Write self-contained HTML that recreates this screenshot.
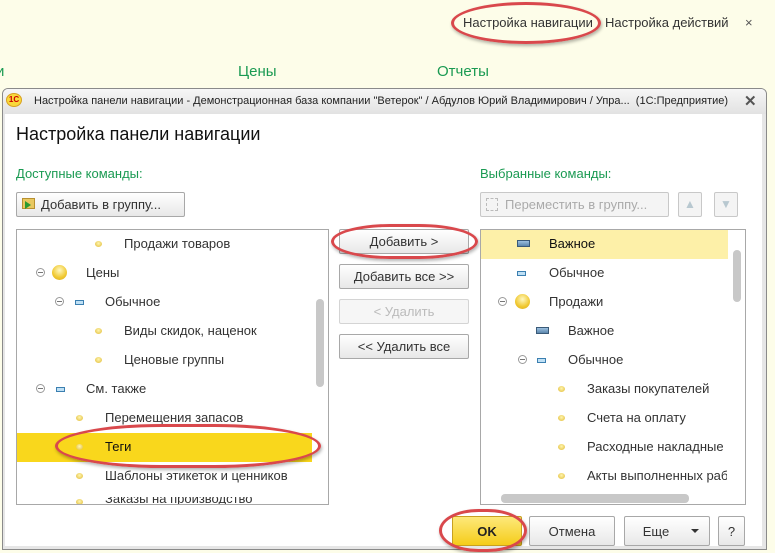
<!DOCTYPE html>
<html><head><meta charset="utf-8"><style>
*{margin:0;padding:0;box-sizing:border-box}
body{width:775px;height:553px;overflow:hidden;background:#fdfde9;font-family:"Liberation Sans",sans-serif;position:relative;font-size:13px;color:#333}
.a{position:absolute;white-space:nowrap}
.btn{position:absolute;border:1px solid #a8a8a8;border-radius:2px;background:linear-gradient(#fff,#e8e8e8);text-align:center;font-size:13px;color:#333}
.oval{position:absolute;border:3px solid #d9484c;border-radius:50%/50%;box-shadow:1px 2px 3px rgba(0,0,0,.3)}
.dot{position:absolute;width:7px;height:6px;border-radius:50%;background:radial-gradient(circle at 50% 40%,#fff6b0,#e0b830)}
.big{position:absolute;width:15px;height:15px;border-radius:50%;background:radial-gradient(circle at 50% 35%,#fff8c0,#f0c830 60%,#d9a820)}
.min{position:absolute;width:9px;height:5px;border:1px solid #3b7fb0;background:#bfe0f5}
.imp{position:absolute;width:13px;height:7px;border:1px solid #3a5a78;background:linear-gradient(#9cc0e0,#5c86ac)}
.exp{position:absolute;width:9px;height:9px;border:1px solid #999;border-radius:50%;font-size:0}
.exp:after{content:"";position:absolute;left:1px;top:3px;width:5px;height:1px;background:#777}
.t{position:absolute;font-size:13px;color:#333;white-space:nowrap}
</style></head><body>
<div class="a" style="left:463px;top:15px;font-size:13px;color:#333">Настройка навигации</div>
<div class="a" style="left:605px;top:15px;font-size:13px;color:#333">Настройка действий</div>
<div class="a" style="left:745px;top:15px;font-size:13px;color:#555">×</div>
<div class="oval" style="left:451px;top:2px;width:150px;height:42px"></div>
<div class="a" style="left:-4px;top:63px;font-size:15px;color:#1a9a52">и</div>
<div class="a" style="left:238px;top:63px;font-size:15px;color:#1a9a52">Цены</div>
<div class="a" style="left:437px;top:63px;font-size:15px;color:#1a9a52">Отчеты</div>

<div class="a" style="left:2px;top:88px;width:765px;height:462px;background:#e6e6e6;border:1px solid #8a8a8a;border-radius:6px 6px 0 0"></div>
<div class="a" style="left:3px;top:89px;width:763px;height:25px;background:linear-gradient(#f6f6f6,#e2e2e2);border-radius:5px 5px 0 0"></div>
<div class="a" style="left:6px;top:93px;width:16px;height:14px;border-radius:50%;background:#f9d93a;border:1px solid #d8a020;font-size:8px;color:#c00;font-weight:bold;text-align:center;line-height:12px">1С</div>
<div class="a" style="left:34px;top:95px;font-size:11px;color:#222">Настройка панели навигации - Демонстрационная база компании "Ветерок" / Абдулов Юрий Владимирович / Упра...&nbsp; (1С:Предприятие)</div>
<div class="a" style="left:744px;top:92px;font-size:15px;font-weight:bold;color:#555">✕</div>
<div class="a" style="left:5px;top:114px;width:757px;height:432px;background:#fff"></div>

<div class="a" style="left:16px;top:124px;font-size:18px;color:#111">Настройка панели навигации</div>
<div class="a" style="left:16px;top:166px;font-size:13px;color:#1a9a52">Доступные команды:</div>
<div class="a" style="left:480px;top:166px;font-size:13px;color:#1a9a52">Выбранные команды:</div>

<div class="btn" style="left:16px;top:192px;width:169px;height:25px;text-align:left;padding:4px 0 0 24px">Добавить в группу...</div>
<div class="a" style="left:22px;top:198px;width:13px;height:11px;background:#e8c860;border:1px solid #b89030"></div>
<div class="a" style="left:25px;top:201px;width:0;height:0;border-left:6px solid #2a9a30;border-top:4px solid transparent;border-bottom:4px solid transparent"></div>
<div class="btn" style="left:480px;top:192px;width:189px;height:25px;color:#aaa;text-align:left;padding:4px 0 0 24px;background:#f4f4f4;border-color:#c8c8c8">Переместить в группу...</div>
<div class="a" style="left:486px;top:198px;width:12px;height:13px;border:1px dashed #bbb"></div>
<div class="btn" style="left:678px;top:192px;width:24px;height:25px;background:#f4f4f4;border-color:#c8c8c8;color:#b8c8d0;font-size:12px;padding-top:4px">▲</div>
<div class="btn" style="left:714px;top:192px;width:24px;height:25px;background:#f4f4f4;border-color:#c8c8c8;color:#b8c8d0;font-size:12px;padding-top:4px">▼</div>

<div class="a" style="left:16px;top:229px;width:313px;height:276px;border:1px solid #a8a8a8;overflow:hidden;background:#fff">
 <div class="a" style="left:0;top:203px;width:295px;height:29px;background:#f9d71c"></div>
 <div class="a" style="left:299px;top:69px;width:8px;height:88px;background:#c8c8c8;border-radius:4px"></div>
</div>
<div class="dot" style="left:95px;top:241px"></div><div class="t" style="left:124px;top:236px">Продажи товаров</div>
<div class="exp" style="left:36px;top:268px"></div><div class="big" style="left:52px;top:265px"></div><div class="t" style="left:86px;top:265px">Цены</div>
<div class="exp" style="left:55px;top:297px"></div><div class="min" style="left:75px;top:300px"></div><div class="t" style="left:105px;top:294px">Обычное</div>
<div class="dot" style="left:95px;top:328px"></div><div class="t" style="left:124px;top:323px">Виды скидок, наценок</div>
<div class="dot" style="left:95px;top:357px"></div><div class="t" style="left:124px;top:352px">Ценовые группы</div>
<div class="exp" style="left:36px;top:384px"></div><div class="min" style="left:56px;top:387px"></div><div class="t" style="left:86px;top:381px">См. также</div>
<div class="dot" style="left:76px;top:415px"></div><div class="t" style="left:105px;top:410px">Перемещения запасов</div>
<div class="dot" style="left:76px;top:444px"></div><div class="t" style="left:105px;top:439px;color:#111">Теги</div>
<div class="dot" style="left:76px;top:473px"></div><div class="t" style="left:105px;top:468px">Шаблоны этикеток и ценников</div>
<div class="a" style="left:17px;top:497px;width:300px;height:7px;overflow:hidden"><div class="dot" style="left:59px;top:2px"></div><div class="t" style="left:88px;top:-6px">Заказы на производство</div></div>
<div class="oval" style="left:55px;top:424px;width:266px;height:44px;border-radius:40%/50%"></div>

<div class="btn" style="left:339px;top:229px;width:130px;height:25px;padding-top:4px">Добавить &gt;</div>
<div class="btn" style="left:339px;top:264px;width:130px;height:25px;padding-top:4px">Добавить все &gt;&gt;</div>
<div class="btn" style="left:339px;top:299px;width:130px;height:25px;padding-top:4px;color:#bbb;border-color:#d4d4d4;background:#f6f6f6">&lt; Удалить</div>
<div class="btn" style="left:339px;top:334px;width:130px;height:25px;padding-top:4px">&lt;&lt; Удалить все</div>
<div class="oval" style="left:331px;top:224px;width:147px;height:35px;border-radius:40%/50%"></div>

<div class="a" style="left:480px;top:229px;width:266px;height:276px;border:1px solid #a8a8a8;overflow:hidden;background:#fff">
 <div class="a" style="left:0;top:0;width:247px;height:29px;background:#fdf0a8"></div>
 <div class="a" style="left:252px;top:20px;width:8px;height:52px;background:#c8c8c8;border-radius:4px"></div>
 <div class="a" style="left:20px;top:264px;width:188px;height:9px;background:#c8c8c8;border-radius:4px"></div>
</div>
<div class="imp" style="left:517px;top:240px"></div><div class="t" style="left:549px;top:236px;color:#111">Важное</div>
<div class="min" style="left:517px;top:271px"></div><div class="t" style="left:549px;top:265px">Обычное</div>
<div class="exp" style="left:498px;top:297px"></div><div class="big" style="left:515px;top:294px"></div><div class="t" style="left:549px;top:294px">Продажи</div>
<div class="imp" style="left:536px;top:327px"></div><div class="t" style="left:568px;top:323px">Важное</div>
<div class="exp" style="left:518px;top:355px"></div><div class="min" style="left:537px;top:358px"></div><div class="t" style="left:568px;top:352px">Обычное</div>
<div class="dot" style="left:558px;top:386px"></div><div class="t" style="left:587px;top:381px">Заказы покупателей</div>
<div class="dot" style="left:558px;top:415px"></div><div class="t" style="left:587px;top:410px">Счета на оплату</div>
<div class="dot" style="left:558px;top:444px"></div><div class="t" style="left:587px;top:439px">Расходные накладные</div>
<div class="dot" style="left:558px;top:473px"></div><div class="a" style="left:587px;top:468px;width:140px;overflow:hidden"><span class="t" style="position:static">Акты выполненных работ</span></div>

<div class="btn" style="left:452px;top:516px;width:70px;height:30px;background:linear-gradient(#fde97a,#f5cc1a);border-color:#c8a020;font-weight:bold;font-size:13px;padding-top:7px;color:#222">OK</div>
<div class="oval" style="left:439px;top:509px;width:88px;height:43px;border-radius:45%/50%"></div>
<div class="btn" style="left:529px;top:516px;width:86px;height:30px;padding-top:7px">Отмена</div>
<div class="btn" style="left:624px;top:516px;width:86px;height:30px;padding:7px 22px 0 0">Еще</div>
<div class="a" style="left:691px;top:529px;width:0;height:0;border-top:4px solid #333;border-left:4px solid transparent;border-right:4px solid transparent"></div>
<div class="btn" style="left:718px;top:516px;width:27px;height:30px;padding-top:7px;font-size:13px">?</div>
</body></html>
